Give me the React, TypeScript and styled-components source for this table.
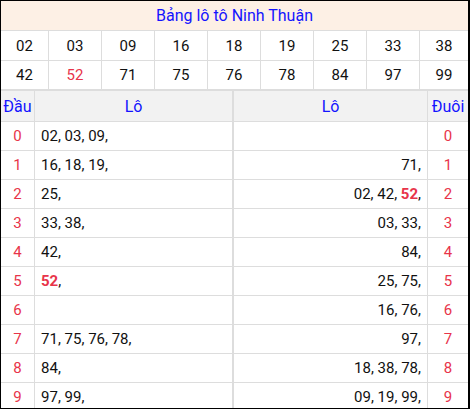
import React from "react";
import styled, { createGlobalStyle } from "styled-components";

const topNumbers = [
  ["02", "03", "09", "16", "18", "19", "25", "33", "38"],
  ["42", "52", "71", "75", "76", "78", "84", "97", "99"],
];

const special = ["52"];

const dau = [
  ["02", "03", "09"],
  ["16", "18", "19"],
  ["25"],
  ["33", "38"],
  ["42"],
  ["52"],
  [],
  ["71", "75", "76", "78"],
  ["84"],
  ["97", "99"],
];

const duoi = [
  [],
  ["71"],
  ["02", "42", "52"],
  ["03", "33"],
  ["84"],
  ["25", "75"],
  ["16", "76"],
  ["97"],
  ["18", "38", "78"],
  ["09", "19", "99"],
];

const NumberList: React.FC<{ items: string[] }> = ({ items }) => (
  <>
    {items.map((n, i) => (
      <React.Fragment key={i}>
        {i > 0 && " "}
        {special.includes(n) ? <Hot>{n}</Hot> : n},
      </React.Fragment>
    ))}
  </>
);

export default function App() {
  return (
    <>
      <GlobalStyle />
      <Board>
        <Title>Bảng lô tô Ninh Thuận</Title>
        <NumberGrid>
          {topNumbers.flat().map((n, i) => (
            <NumberCell key={i} $red={special.includes(n)}>
              {n}
            </NumberCell>
          ))}
        </NumberGrid>
        <Tables>
          <Table $cols="33px 1fr">
            <HeadCell>Đầu</HeadCell>
            <HeadCell>Lô</HeadCell>
            {dau.map((row, i) => (
              <React.Fragment key={i}>
                <DigitCell>{i}</DigitCell>
                <LoCell $align="left">
                  <NumberList items={row} />
                </LoCell>
              </React.Fragment>
            ))}
          </Table>
          <Table $cols="1fr 40px">
            <HeadCell>Lô</HeadCell>
            <HeadCell>Đuôi</HeadCell>
            {duoi.map((row, i) => (
              <React.Fragment key={i}>
                <LoCell $align="right">
                  <NumberList items={row} />
                </LoCell>
                <DigitCell>{i}</DigitCell>
              </React.Fragment>
            ))}
          </Table>
        </Tables>
      </Board>
    </>
  );
}

// Styled Components

const GlobalStyle = createGlobalStyle`
  body {
    margin: 0;
    background: #fff;
    font-family: Roboto, "Liberation Sans", sans-serif;
  }
`;

const Board = styled.div`
  width: 470px;
  height: 409px;
  box-sizing: border-box;
  border: 1px solid #000;
  border-right-width: 2px;
  overflow: hidden;
  background: #fff;
`;

const Title = styled.div`
  height: 29px;
  border-bottom: 1px solid #ddd;
  background: #fdf0e5;
  color: #1414ff;
  font-size: 16px;
  display: flex;
  align-items: center;
  justify-content: center;
`;

const NumberGrid = styled.div`
  display: grid;
  grid-template-columns: 47px repeat(7, 52px) 1fr;
  grid-template-rows: 29px 28px;
  gap: 1px;
  background: #ddd;
  border-bottom: 2px solid #ddd;
`;

const NumberCell = styled.div<{ $red?: boolean }>`
  background: #fff;
  display: flex;
  align-items: center;
  justify-content: center;
  font-size: 15px;
  color: ${(p) => (p.$red ? "#e8344a" : "#111")};
`;

const Tables = styled.div`
  display: flex;
  gap: 2px;
  background: #ddd;
`;

const Table = styled.div<{ $cols: string }>`
  flex: 1;
  display: grid;
  grid-template-columns: ${(p) => p.$cols};
  grid-template-rows: 30px;
  grid-auto-rows: 28px;
  gap: 1px;
  background: #ddd;

  &:first-child {
    flex: 0 0 231px;
  }
`;

const HeadCell = styled.div`
  background: #f2f2f2;
  color: #1414ff;
  font-size: 16px;
  display: flex;
  align-items: center;
  justify-content: center;
`;

const DigitCell = styled.div`
  background: #fff;
  color: #e8344a;
  font-size: 15px;
  display: flex;
  align-items: center;
  justify-content: center;
`;

const LoCell = styled.div<{ $align: "left" | "right" }>`
  background: #fff;
  color: #111;
  font-size: 15px;
  display: flex;
  align-items: center;
  justify-content: ${(p) => (p.$align === "left" ? "flex-start" : "flex-end")};
  padding: 0 6px;
  white-space: pre;
`;

const Hot = styled.b`
  color: #e8344a;
  font-weight: 700;
`;
